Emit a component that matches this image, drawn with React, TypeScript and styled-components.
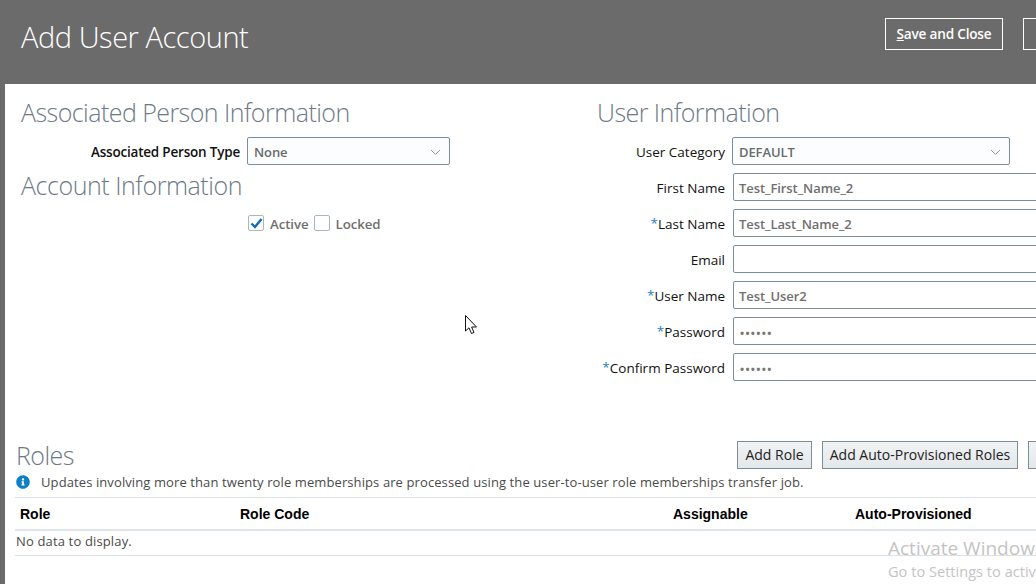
import React from 'react';
import styled, { createGlobalStyle } from 'styled-components';
import { FaInfoCircle } from 'react-icons/fa';

const Global = createGlobalStyle`
  html, body {
    margin: 0;
    padding: 0;
    background: #6b6b6b;
  }
  * {
    box-sizing: border-box;
  }
`;

const Page = styled.div`
  position: relative;
  width: 1036px;
  height: 584px;
  overflow: hidden;
  background: #6b6b6b;
  font-family: 'Open Sans', 'Noto Sans', sans-serif;
  font-size: 13px;
`;

const Header = styled.header`
  height: 84px;
  display: flex;
  justify-content: space-between;
  align-items: flex-start;
  padding: 18px 0 0 21px;
`;

const Title = styled.h1`
  margin: 0;
  color: #fff;
  font-size: 29px;
  font-weight: 300;
  line-height: 38px;
  letter-spacing: -0.45px;
`;

const HeaderActions = styled.div`
  display: flex;
  gap: 20px;
  margin-right: -30px;
`;

const HeaderButton = styled.div<{ $wide?: boolean }>`
  width: ${({ $wide }) => ($wide ? '118px' : '43px')};
  height: 32px;
  border: 1px solid #fff;
  color: #fff;
  font-weight: 600;
  font-size: 13.6px;
  letter-spacing: -0.2px;
  line-height: 30px;
  text-align: center;
  span {
    text-decoration: underline;
  }
`;

const Content = styled.main`
  height: 500px;
  margin-left: 5px;
  background: #fff;
`;

const Columns = styled.div`
  height: 350px;
  display: grid;
  grid-template-columns: 576px 1fr;
  padding: 13px 0 0 16px;
`;

const Heading = styled.h2`
  margin: 0;
  color: #6d7a85;
  font-size: 25px;
  font-weight: 300;
  line-height: 30px;
  letter-spacing: -0.55px;
`;

const SubHeading = styled(Heading)`
  margin-top: 5px;
  letter-spacing: -0.45px;
`;

const FormGrid = styled.div<{ $label: number }>`
  display: grid;
  grid-template-columns: ${({ $label }) => $label}px 1fr;
  column-gap: 7px;
  row-gap: 8px;
  align-items: center;
  margin-top: 10px;
`;

const Label = styled.label`
  color: #111;
  text-align: right;
  font-weight: 600;
  font-size: 13.5px;
  letter-spacing: -0.2px;
  line-height: 20px;
  padding-top: 1px;
  white-space: nowrap;
`;

const NormalLabel = styled(Label)`
  font-weight: 500;
  letter-spacing: 0;
`;

const Star = styled.span`
  color: #1f7fc4;
  font-weight: 400;
  line-height: 0;
  vertical-align: 1px;
`;

const Select = styled.div<{ $width: number }>`
  width: ${({ $width }) => $width}px;
  height: 28px;
  display: flex;
  align-items: center;
  justify-content: space-between;
  padding: 2px 8px 0 6px;
  background: #fbfdfe;
  border: 1px solid #7b8e9c;
  border-radius: 2px;
  color: #6a6a6a;
  font-weight: 600;
  letter-spacing: -0.1px;
`;

const Input = styled.div`
  width: 330px;
  height: 28px;
  margin-left: 1px;
  padding: 0 5px;
  line-height: 28px;
  background: #fff;
  border: 1px solid #7b8e9c;
  border-radius: 2px;
  color: #6f6f6f;
  font-weight: 600;
  letter-spacing: -0.08px;
  white-space: nowrap;
`;

const Dots = styled.span`
  font-size: 11px;
  letter-spacing: 1.3px;
  font-weight: 700;
  color: #777;
  margin-left: 1px;
`;

const Checks = styled.div`
  display: flex;
  align-items: center;
  margin: 14px 0 0 227px;
  color: #6f6f6f;
  font-weight: 600;
  font-size: 13.3px;
  letter-spacing: -0.1px;
`;

const Box = styled.span`
  width: 16px;
  height: 16px;
  display: inline-flex;
  align-items: center;
  justify-content: center;
  background: #fff;
  border: 1px solid #a9b6c0;
  border-radius: 2px;
`;

const CheckText = styled.span`
  margin: 0 5px 0 6px;
  position: relative;
  top: 1px;
`;

const Roles = styled.section`
  padding-left: 10px;
`;

const RolesTop = styled.div`
  height: 30px;
  display: flex;
  align-items: center;
  justify-content: space-between;
  margin-top: 6px;
`;

const RolesHeading = styled(Heading)`
  position: relative;
  top: 0;
  left: 1px;
`;

const RoleButtons = styled.div`
  display: flex;
  gap: 10px;
  margin-right: -52px;
`;

const RoleButton = styled.div<{ $width: number }>`
  width: ${({ $width }) => $width}px;
  height: 28px;
  background: linear-gradient(#f1f3f4, #e4e8ea);
  border: 1px solid #7b8e9c;
  color: #222;
  font-size: 14px;
  line-height: 26px;
  text-align: center;
  font-weight: 500;
`;

const Notice = styled.div`
  height: 27px;
  display: flex;
  align-items: center;
  gap: 11px;
  padding: 0 0 3px 1px;
  color: #4a4a4a;
  letter-spacing: 0.1px;
  svg {
    color: #0c7fc7;
  }
`;

const TableHead = styled.div`
  height: 34px;
  display: grid;
  grid-template-columns: 220px 433px 182px 1fr;
  align-items: center;
  padding-left: 5px;
  border-top: 1px solid #dbe1e6;
  border-bottom: 2px solid #dfe5ea;
  color: #000;
  font-family: 'Liberation Sans', Arial, sans-serif;
  font-size: 14px;
  font-weight: 700;
`;

const EmptyRow = styled.div`
  height: 25px;
  padding-left: 1px;
  line-height: 20px;
  border-bottom: 1px solid #dbe1e6;
  color: #4a4a4a;
  letter-spacing: 0.15px;
`;

const Watermark = styled.div`
  position: absolute;
  left: 888px;
  top: 536px;
  color: #c4c4c4;
  white-space: nowrap;
`;

const WatermarkTitle = styled.div`
  font-size: 19px;
  line-height: 24px;
`;

const WatermarkSub = styled.div`
  font-size: 14.6px;
  line-height: 22px;
`;

const Cursor = styled.svg`
  position: absolute;
  left: 465px;
  top: 315px;
`;

const Chevron = () => (
  <svg width="11" height="7" viewBox="0 0 11 7" fill="none" stroke="#8d9aa3" strokeWidth="1">
    <path d="M1 1l4.5 4.5L10 1" />
  </svg>
);

const userFields = [
  { label: 'First Name', value: 'Test_First_Name_2' },
  { label: 'Last Name', value: 'Test_Last_Name_2', required: true },
  { label: 'Email', value: '' },
  { label: 'User Name', value: 'Test_User2', required: true },
  { label: 'Password', value: '••••••', required: true, secret: true },
  { label: 'Confirm Password', value: '••••••', required: true, secret: true },
];

export default function App() {
  return (
    <Page>
      <Global />
      <Header>
        <Title>Add User Account</Title>
        <HeaderActions>
          <HeaderButton $wide>
            <span>S</span>ave and Close
          </HeaderButton>
          <HeaderButton />
        </HeaderActions>
      </Header>
      <Content>
        <Columns>
          <div>
            <Heading>Associated Person Information</Heading>
            <FormGrid $label={219}>
              <Label>Associated Person Type</Label>
              <Select $width={203}>
                None
                <Chevron />
              </Select>
            </FormGrid>
            <SubHeading>Account Information</SubHeading>
            <Checks>
              <Box>
                <svg width="13" height="11" viewBox="0 0 13 11" fill="none" stroke="#0f6cbd" strokeWidth="2.4">
                  <path d="M1.5 5.5l3.5 3.5 6.5-8" />
                </svg>
              </Box>
              <CheckText>Active</CheckText>
              <Box />
              <CheckText>Locked</CheckText>
            </Checks>
          </div>
          <div>
            <Heading>User Information</Heading>
            <FormGrid $label={128}>
              <NormalLabel>User Category</NormalLabel>
              <Select $width={278}>
                DEFAULT
                <Chevron />
              </Select>
              {userFields.map(field => (
                <React.Fragment key={field.label}>
                  <NormalLabel>
                    {field.required && <Star>*</Star>}
                    {field.label}
                  </NormalLabel>
                  <Input>{field.secret ? <Dots>{field.value}</Dots> : field.value}</Input>
                </React.Fragment>
              ))}
            </FormGrid>
          </div>
        </Columns>
        <Roles>
          <RolesTop>
            <RolesHeading>Roles</RolesHeading>
            <RoleButtons>
              <RoleButton $width={75}>Add Role</RoleButton>
              <RoleButton $width={196}>Add Auto-Provisioned Roles</RoleButton>
              <RoleButton $width={60} />
            </RoleButtons>
          </RolesTop>
          <Notice>
            <FaInfoCircle size={14} />
            Updates involving more than twenty role memberships are processed using the user-to-user role memberships transfer job.
          </Notice>
          <TableHead>
            <span>Role</span>
            <span>Role Code</span>
            <span>Assignable</span>
            <span>Auto-Provisioned</span>
          </TableHead>
          <EmptyRow>No data to display.</EmptyRow>
        </Roles>
      </Content>
      <Cursor width="13" height="20" viewBox="0 0 13 20">
        <path d="M0.5 0.5V16L4 12.8 6.5 18.5 9 17.4 6.6 12H11.5Z" fill="#fff" stroke="#111" strokeWidth="1" />
      </Cursor>
      <Watermark>
        <WatermarkTitle>Activate Windows</WatermarkTitle>
        <WatermarkSub>Go to Settings to activate Windows.</WatermarkSub>
      </Watermark>
    </Page>
  );
}
